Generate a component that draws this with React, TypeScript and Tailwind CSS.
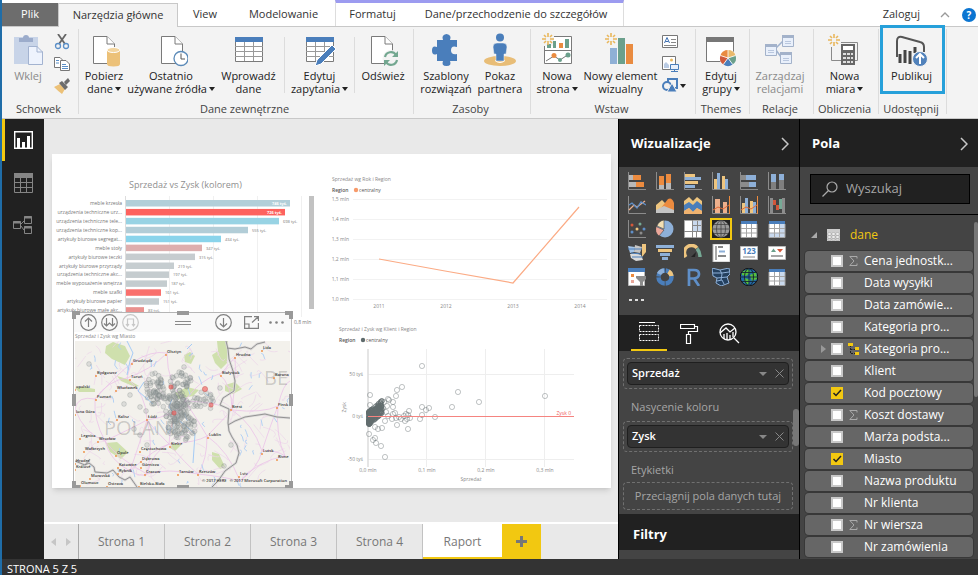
import { useState } from "react";
import type { ReactNode } from "react";

const SUN = "M0 -6V-2M0 2V6M-6 0H-2M2 0H6M-4 -4L-2 -2M4 -4L2 -2M-4 4L-2 2M4 4L2 2";

function Sun({ x, y }: { x: number; y: number }) {
    return <path d={SUN} transform={`translate(${x} ${y})`} stroke="#e9b75c" strokeWidth="1.6" fill="none" />
}

function Page({ x }: { x: number }) {
    return (
        <g transform={`translate(${x} 0)`} fill="#fff" stroke="#7a7a7a">
            <path d="M.5 3.5H14L21.5 11V30.5H.5Z" />
            <path d="M14 3.5V11H21.5" />
        </g>
    )
}

function Sheet() {
    return (
        <g>
            <path d="M3.500 4.500H30.500V28.500H3.500Z" fill="#fff" stroke="#7a7a7a" />
            <path d="M3 4H31V9H3Z" fill="#4a7ebb" />
            <path d="M3 13.500H31M3 18.500H31M3 23.500H31M12.500 9V28M21.500 9V28" stroke="#9a9a9a" fill="none" />
        </g>
    )
}

const ribbonIcons: Record<string, ReactNode> = {
    getData: (
        <>
            <Page x={6} />
            <path d="M20 17V31Q20 33.500 26.500 33.500T33 31V17Z" fill="#ecc178" />
            <ellipse cx="26.500" cy="17" rx="6.500" ry="2.500" fill="#f3d59f" stroke="#fff" />
        </>
    ),
    recent: (
        <>
            <Page x={7} />
            <circle cx="27" cy="25.500" r="7" fill="#fff" stroke="#5b8ab8" strokeWidth="1.300" />
            <path d="M27 20.500V26H31" stroke="#555" fill="none" />
        </>
    ),
    enter: <Sheet />,
    editQuery: (
        <>
            <Sheet />
            <path d="M12 33L14 27L29 12L33 16L18 31Z" fill="#4a7ebb" stroke="#fff" />
        </>
    ),
    refresh: (
        <>
            <Page x={5} />
            <circle cx="25" cy="25.500" r="8.500" fill="#f3f3f3" />
            <path d="M19 24A6 6 0 0 1 30 22M31 27A6 6 0 0 1 20 29" stroke="#73a790" strokeWidth="2.200" fill="none" />
            <path d="M32 18V24H26ZM18 33V27H24Z" fill="#73a790" />
        </>
    ),
    puzzle: (
        <path
            d="M8 7H14Q12 2 17.500 1Q23 2 21 7H28V14Q22 12 22 17.500Q22 22 28 21V28H21Q23 33 17.500 33Q12 33 14 28H8V21Q3 23 3 17.500Q3 12 8 14Z"
            fill="#4a7ebb"
        />
    ),
    partner: (
        <>
            <ellipse cx="17" cy="28" rx="16" ry="5" fill="#e8bd77" />
            <path d="M12 27Q17 31 22 27V28Q17 32 12 28Z" fill="#fff" />
            <circle cx="17" cy="4.500" r="4" fill="#4a7ebb" />
            <path d="M14 10H20Q24 10 24 14L23 21H21V28H13V21H11L10 14Q10 10 14 10Z" fill="#4a7ebb" stroke="#f3f3f3" strokeWidth=".5" />
        </>
    ),
    newPage: (
        <>
            <path d="M4.500 3.500H31.500V30.500H4.500ZM4 17.500H32" fill="#fff" stroke="#7a7a7a" />
            <path d="M2 0H14V13H2Z" fill="#f3f3f3" />
            <path d="M7 11H11V15H7ZM13 8H16V15H13ZM25 6H29V15H25Z" fill="#6ba08c" />
            <path d="M19 10H23V15H19Z" fill="#e98b40" />
            <path d="M6 28L14 23L20 27L29 21" stroke="#777" fill="none" />
            <circle cx="14" cy="22.500" r="2.500" fill="#e98b40" />
            <circle cx="20" cy="27" r="2" fill="#6ba08c" />
            <circle cx="28" cy="22" r="2.500" fill="#6ba08c" />
            <Sun x={8} y={6} />
        </>
    ),
    newVisual: (
        <>
            <path d="M6 15H13V31H6Z" fill="#8fb0d6" />
            <path d="M14 5H21V31H14Z" fill="#6ba08c" />
            <path d="M22 11H29V31H22Z" fill="#e98b40" />
            <Sun x={7} y={6} />
        </>
    ),
    theme: (
        <>
            <path d="M2.500 4.500H29.500V28.500H2.500Z" fill="#fff" stroke="#777" />
            <path d="M2 4H30V9H2Z" fill="#777" />
            <circle cx="24" cy="25" r="8.500" fill="#fff" />
            <path d="M24 25V17A8 8 0 0 1 31.600 22.500Z" fill="#e9b96b" />
            <path d="M24 25L31.600 22.500A8 8 0 0 1 28.700 31.500Z" fill="#6ba08c" />
            <path d="M24 25L28.700 31.500A8 8 0 0 1 19.300 31.500Z" fill="#4a7ebb" />
            <path d="M24 25L19.300 31.500A8 8 0 0 1 16.400 22.500Z" fill="#cf5b3d" />
            <path d="M24 25L16.400 22.500A8 8 0 0 1 24 17Z" fill="#e98b40" />
            <path d="M24 25V17M24 25L31.600 22.500M24 25L28.700 31.500M24 25L19.300 31.500M24 25L16.400 22.500" stroke="#fff" strokeWidth=".8" />
        </>
    ),
    relations: (
        <>
            <path d="M13 15L20 8M13 17L18 24" stroke="#9fb2cf" strokeWidth="1.500" />
            {[[2, 11], [19, 2], [17, 19]].map(([x, y]) => (
                <g key={x} transform={`translate(${x} ${y})`}>
                    <path d="M.5 .5H11.500V11.500H.5Z" fill="#e9f0fb" stroke="#a3b2ca" />
                    <path d="M0 0H12V3H0Z" fill="#a3b2ca" />
                    <path d="M3 6.500H9M3 8.500H9" stroke="#b9c7de" />
                </g>
            ))}
        </>
    ),
    measure: (
        <>
            <path d="M3.500 14V27.500H13M13 9.500H29.500V27.500H26" stroke="#8a8a8a" fill="none" />
            <path d="M13 11H27V32H13Z" fill="#666" />
            <path d="M15 13H25V17H15Z" fill="#fff" />
            <path d="M15 20H18V22H15ZM19 20H22V22H19ZM23 20H25V22H23ZM15 24H18V26H15ZM19 24H22V26H19ZM23 24H25V26H23ZM15 28H18V30H15ZM19 28H22V30H19ZM23 28H25V30H23Z" fill="#ddd" />
            <Sun x={6} y={7} />
        </>
    ),
    publish: (
        <>
            <path d="M2 24V8Q2 3 7 4L25 9Q29 10 29 14V19" stroke="#555" strokeWidth="2" fill="none" />
            <path d="M5 21V30M10 17V30M15 18V31M20 14V20" stroke="#444" strokeWidth="3" />
            <circle cx="25" cy="26" r="7.500" fill="#5182bb" stroke="#f3f3f3" />
            <path d="M25 31V21M21 25L25 21L29 25" stroke="#fff" strokeWidth="2" fill="none" />
        </>
    ),
    paste: (
        <>
            <path d="M3 4H27V31H3Z" fill="#c8d4e8" />
            <path d="M8 9V5H12Q12 2 15 2T18 5H22V9Z" fill="#9caccb" />
            <path d="M17.500 13.500H26L31.500 19V31.500H17.500Z" fill="#eef3fd" stroke="#a3b3d0" />
            <path d="M26 13V19H32" stroke="#a3b3d0" fill="none" />
        </>
    ),
}

interface RibbonButtonProps {
    icon: string,
    lines: string[],
    width: string,
    caret?: boolean,
    dim?: boolean,
    marked?: boolean,
}

function RibbonButton({ icon, lines, width, caret, dim, marked }: RibbonButtonProps) {
    return (
        <button className={`relative flex shrink-0 flex-col items-center pt-1.5 ${width} ${dim ? "text-[#8a8a8a]" : "text-[#222]"}`}>
            <svg width="34" height="34" viewBox="0 0 34 34">{ribbonIcons[icon]}</svg>
            <span className="mt-0.5 flex flex-col items-center">
                {lines.map((line, i) => (
                    <span key={line} className="flex items-center gap-0.5 leading-[13px] whitespace-nowrap">
                        {line}
                        {caret && i === lines.length - 1 && <Caret />}
                    </span>
                ))}
            </span>
            {marked && <span className="absolute -top-0.5 -right-px left-px h-[69px] border-3 border-[#26a0da]" />}
        </button>
    )
}

function Caret() {
    return <svg width="6" height="4" viewBox="0 0 6 4"><path d="M0 0H6L3 4Z" fill="#222" /></svg>
}

function RibbonGroup({ title, width, children }: { title: string, width: string, children: ReactNode }) {
    return (
        <section className={`relative flex shrink-0 flex-col justify-between pb-[3px] ${width}`}>
            <div className="flex">{children}</div>
            <h2 className="pr-1 text-center leading-[13px] text-[#444]">{title}</h2>
            <span className="absolute top-0.5 right-0 bottom-1 w-px bg-[#dcdcdc]" />
        </section>
    )
}

function Ribbon() {
    return (
        <div className="flex h-[92px] shrink-0 overflow-visible border-b border-[#c8c8c8] bg-[#f3f3f3] text-[11px]">
            <RibbonGroup title="Schowek" width="w-[77px]">
                <RibbonButton icon="paste" lines={["Wklej"]} width="w-[52px]" dim />
                <div className="flex flex-col gap-1.5 pt-[7px]">
                    <button aria-label="Wytnij">
                        <svg width="16" height="16" viewBox="0 0 16 16" fill="none">
                            <path d="M4 0L11 10M12 0L5 10" stroke="#666" strokeWidth="1.800" />
                            <circle cx="4" cy="12" r="2.500" stroke="#5b8fc7" strokeWidth="1.300" />
                            <circle cx="12" cy="12" r="2.500" stroke="#5b8fc7" strokeWidth="1.300" />
                        </svg>
                    </button>
                    <button aria-label="Kopiuj">
                        <svg width="16" height="16" viewBox="0 0 16 16" fill="#fff" stroke="#777">
                            <path d="M.5 1.500H6L9.500 5V11.500H.5Z" />
                            <path d="M6.500 4.500H12L15.500 8V14.500H6.500Z" />
                            <path d="M2 4.500H5M2 7H5M8 8.500H12M8 10.500H14M8 12.500H14" stroke="#5b8fc7" />
                        </svg>
                    </button>
                    <button aria-label="Malarz formatów">
                        <svg width="16" height="16" viewBox="0 0 16 16">
                            <path d="M0 9L6 6L11 11L8 16Q4 13 0 9Z" fill="#ecc178" />
                            <path d="M5 5L8 3L14 9L11 12ZM10 4L14 0L16 3L12 7Z" fill="#6d6d6d" />
                        </svg>
                    </button>
                </div>
            </RibbonGroup>
            <RibbonGroup title="Dane zewnętrzne" width="w-[335px]">
                <RibbonButton icon="getData" lines={["Pobierz", "dane"]} width="w-[50px]" caret />
                <RibbonButton icon="recent" lines={["Ostatnio", "używane źródła"]} width="w-[84px]" caret />
                <RibbonButton icon="enter" lines={["Wprowadź", "dane"]} width="w-[71px]" />
                <span className="mt-2.5 h-14 w-px bg-[#dcdcdc]" />
                <RibbonButton icon="editQuery" lines={["Edytuj", "zapytania"]} width="w-[69px]" caret />
                <span className="mt-2.5 h-14 w-px bg-[#dcdcdc]" />
                <RibbonButton icon="refresh" lines={["Odśwież"]} width="w-[56px]" />
            </RibbonGroup>
            <RibbonGroup title="Zasoby" width="w-[117px]">
                <RibbonButton icon="puzzle" lines={["Szablony", "rozwiązań"]} width="w-[64px]" />
                <RibbonButton icon="partner" lines={["Pokaz", "partnera"]} width="w-[44px]" />
            </RibbonGroup>
            <RibbonGroup title="Wstaw" width="w-[165px]">
                <RibbonButton icon="newPage" lines={["Nowa", "strona"]} width="w-[52px]" caret />
                <RibbonButton icon="newVisual" lines={["Nowy element", "wizualny"]} width="w-[75px]" />
                <div className="flex flex-col gap-1.5 pt-[7px] pl-1">
                    <button aria-label="Pole tekstowe">
                        <svg width="16" height="16" viewBox="0 0 16 16">
                            <path d="M.5 1.500H15.500V13.500H.5Z" fill="#fff" stroke="#777" />
                            <path d="M2.500 9L5 3.500L7.500 9M3.500 7.500H6.500" stroke="#3d6fb0" fill="none" />
                            <path d="M9 5.500H14M9 8.500H14M2 11.500H14" stroke="#888" />
                        </svg>
                    </button>
                    <button aria-label="Obraz">
                        <svg width="17" height="16" viewBox="0 0 17 16">
                            <path d="M.5 .5H13.500V13.500H.5Z" fill="#fff" stroke="#777" />
                            <path d="M2 12V8L4 6L7 9V12Z" fill="#b9cbe4" />
                            <circle cx="9.500" cy="4" r="1.500" fill="#e9b75c" />
                            <path d="M8.500 8.500H16.500V13.500H8.500ZM12.500 13V15.500M9 15.500H16" fill="#e9f0fb" stroke="#4a7ebb" />
                        </svg>
                    </button>
                    <button aria-label="Kształty" className="flex items-center gap-0.5">
                        <svg width="16" height="16" viewBox="0 0 16 16">
                            <path d="M6 1H15V10H6Z" fill="#f3f3f3" stroke="#4a7ebb" strokeWidth="2" />
                            <circle cx="5" cy="8" r="4" fill="#f3f3f3" stroke="#4a7ebb" strokeWidth="2" />
                            <path d="M10 5L15 14H5Z" fill="#4a7ebb" stroke="#f3f3f3" />
                        </svg>
                        <Caret />
                    </button>
                </div>
            </RibbonGroup>
            <RibbonGroup title="Themes" width="w-[54px]">
                <RibbonButton icon="theme" lines={["Edytuj", "grupy"]} width="w-[50px]" caret />
            </RibbonGroup>
            <RibbonGroup title="Relacje" width="w-[64px]">
                <RibbonButton icon="relations" lines={["Zarządzaj", "relacjami"]} width="w-[60px]" dim />
            </RibbonGroup>
            <RibbonGroup title="Obliczenia" width="w-[65px]">
                <RibbonButton icon="measure" lines={["Nowa", "miara"]} width="w-[61px]" caret />
            </RibbonGroup>
            <RibbonGroup title="Udostępnij" width="w-[68px]">
                <RibbonButton icon="publish" lines={["Publikuj"]} width="w-[65px]" marked />
            </RibbonGroup>
        </div>
    )
}

function TabBar() {
    return (
        <nav className="flex h-[27px] shrink-0 items-end border-b border-[#c8c8c8] bg-white text-[11px] text-[#333]">
            <button className="h-[23px] w-14 bg-[#6d6d6d] text-white">Plik</button>
            <button className="-mb-px h-6 w-[120px] border border-b-0 border-[#c8c8c8] bg-[#f3f3f3]">Narzędzia główne</button>
            <button className="h-[23px] w-[54px]">View</button>
            <button className="h-[23px] w-[103px]">Modelowanie</button>
            <div className="flex h-full border-x border-t-3 border-x-[#ddd] border-t-[#9c9bf0]">
                <button className="w-[73px]">Formatuj</button>
                <button className="w-[214px]">Dane/przechodzenie do szczegółów</button>
            </div>
            <div className="ml-auto flex h-[23px] items-center pr-0.5">
                <button>Zaloguj</button>
                <button aria-label="Zwiń wstążkę" className="px-5">
                    <svg width="10" height="6" viewBox="0 0 10 6"><path d="M1 5L5 1L9 5" stroke="#999" strokeWidth="1.300" fill="none" /></svg>
                </button>
                <button className="-ml-2 h-3.5 w-3.5 rounded-full bg-[#0b75d1] text-[10px] leading-[14px] font-bold text-white">?</button>
            </div>
        </nav>
    )
}

function SideRail() {
    return (
        <aside className="flex w-[42px] shrink-0 flex-col bg-[#212121]">
            <button aria-label="Raport" className="flex h-[42px] items-center justify-center border-l-3 border-[#f2c811] pr-0.5">
                <svg width="20" height="19" viewBox="0 0 20 19">
                    <path d="M.7 .7H18.300V17.300H.7Z" fill="none" stroke="#fff" strokeWidth="1.400" />
                    <path d="M3 7H6V17H3ZM8 11H11V17H8ZM13 5H16V17H13Z" fill="#fff" />
                </svg>
            </button>
            <button aria-label="Dane" className="flex h-[43px] items-center justify-center">
                <svg width="19" height="20" viewBox="0 0 19 20">
                    <path d="M.5 .5H18.500V19.500H.5ZM0 9.500H19M0 14.500H19M6.500 4V20M12.500 4V20" fill="none" stroke="#858585" />
                    <path d="M0 0H19V5H0Z" fill="#858585" />
                </svg>
            </button>
            <button aria-label="Model" className="flex h-[42px] items-center justify-center">
                <svg width="20" height="19" viewBox="0 0 20 19" fill="none" stroke="#858585">
                    <path d="M.5 5.500H7.500V12.500H.5ZM11.500 .5H18.500V7.500H11.500ZM11.500 10.500H18.500V17.500H11.500Z" />
                    <path d="M0 6.500H8M11 1.500H19M11 11.500H19" strokeWidth="2" />
                    <path d="M8 8L11 5M8 10L11 14" />
                </svg>
            </button>
        </aside>
    )
}

const salesBars = [
    { name: "meble krzesła", w: 164, value: "746 tyś.", color: "#b2cfd9", inside: true },
    { name: "urządzenia techniczne urz...", w: 159, value: "726 tyś.", color: "#fd625e", inside: true },
    { name: "urządzenia techniczne tele...", w: 153, value: "698 tyś.", color: "#98d3e4" },
    { name: "urządzenia techniczne kop...", w: 122, value: "555 tyś.", color: "#b2cdd7" },
    { name: "artykuły biurowe segregat...", w: 95, value: "434 tyś.", color: "#8ad4eb" },
    { name: "meble stoły", w: 76, value: "347 tyś.", color: "#ddaeae" },
    { name: "artykuły biurowe teczki", w: 69, value: "315 tyś.", color: "#c6cccf" },
    { name: "artykuły biurowe przyrządy", w: 48, value: "219 tyś.", color: "#c6cdd0" },
    { name: "urządzenia techniczne akc...", w: 43, value: "197 tyś.", color: "#c5cccf" },
    { name: "meble wyposażenie wnętrza", w: 41, value: "187 tyś.", color: "#c4cccf" },
    { name: "meble szafki", w: 35, value: "161 tyś.", color: "#f9706d" },
    { name: "artykuły biurowe papier", w: 33, value: "151 tyś.", color: "#c5cccf" },
    { name: "artykuły biurowe małe akc...", w: 18, value: "83 tyś.", color: "#ea918f" },
]

function BarChart() {
    return (
        <svg className="h-[180px] w-full" viewBox="0 0 270 180" preserveAspectRatio="xMinYMin meet">
            <text x="77" y="34" fontSize="9" fill="#8f8f8f">Sprzedaż vs Zysk (kolorem)</text>
            <path d="M117.500 42V163M161.500 42V163M205.500 42V163M249.500 42V163" stroke="#f0f0f0" />
            <path d="M73.500 42V163" stroke="#ddd" />
            {salesBars.map((b, i) => (
                <g key={b.name} fontSize="5">
                    <text x="70" y={51 + i * 8.93} textAnchor="end" fill="#777">{b.name}</text>
                    <rect x="74" y={46 + i * 8.93} width={b.w} height="6.500" fill={b.color} />
                    <text
                        x={b.inside ? 71 + b.w : 78 + b.w}
                        y={51 + i * 8.93}
                        textAnchor={b.inside ? "end" : "start"}
                        fill={b.inside ? "#fff" : "#777"}
                        fontWeight={b.inside ? "700" : "400"}
                        fontSize="4"
                    >
                        {b.value}
                    </text>
                </g>
            ))}
            <path d="M257 42H262V155H257Z" fill="#c2c2c2" />
            <text x="242" y="170" fontSize="5" fill="#777">0,8 mln</text>
        </svg>
    )
}

function LineChart() {
    const ticks = ["1,5 mln", "1,4 mln", "1,3 mln", "1,2 mln", "1,1 mln", "1,0 mln"]
    return (
        <svg className="h-[160px] w-full" viewBox="0 0 285 160" preserveAspectRatio="xMinYMin meet" fontSize="5" fill="#888">
            <text x="6" y="27">Sprzedaż wg Rok i Region</text>
            <text x="6" y="38" fontWeight="600" fill="#555">Region</text>
            <circle cx="30" cy="36" r="2.200" fill="#f79a6b" />
            <text x="33" y="38" fill="#555">centralny</text>
            {ticks.map((t, i) => (
                <g key={t}>
                    <text x="23" y={47 + i * 20} textAnchor="end">{t}</text>
                    <path d={`M27 ${45.5 + i * 20}H281`} stroke="#f2f2f2" />
                </g>
            ))}
            {["2011", "2012", "2013", "2014"].map((t, i) => (
                <text key={t} x={53 + i * 67} y="154" textAnchor="middle">{t}</text>
            ))}
            <path d="M53 105L119 117L187 129L253 53" stroke="#fbab85" strokeWidth="1.200" fill="none" />
        </svg>
    )
}

// keeps the generated points identical between renders
function seeded(seed: number) {
    let s = seed
    return () => {
        s = (s * 16807) % 2147483647
        return s / 2147483647
    }
}

const outliers = [
    [96, 52], [76, 73], [71, 76], [70, 82], [44, 81], [132, 78], [153, 88], [219, 82], [126, 93],
    [96, 93], [103, 94], [100, 96], [83, 97], [109, 103], [96, 101], [94, 105], [71, 111], [82, 115],
    [43, 120], [49, 124], [47, 126], [50, 129], [55, 132], [59, 143], [56, 114], [52, 115], [49, 113],
    [63, 86], [62, 85], [58, 88], [67, 88], [67, 93], [44, 91], [57, 94], [61, 92], [54, 96], [80, 100],
    [69, 99], [84, 104], [79, 107], [66, 105], [59, 107], [73, 103], [75, 105], [78, 102], [82, 101],
    [62, 102], [70, 104], [81, 105], [67, 100], [60, 98], [55, 92],
]
const rndSales = seeded(41)
const dense = Array.from({ length: 150 }, () => {
    const r = rndSales()
    return [43 + r * r * 13, 104 + (rndSales() - 0.5) * 13 - r * r * 11]
})

function ScatterChart() {
    return (
        <svg className="h-[172px] w-full" viewBox="0 0 285 172" preserveAspectRatio="xMinYMin meet" fontSize="5" fill="#888">
            <text x="13" y="17">Sprzedaż i Zysk wg Klient i Region</text>
            <text x="13" y="28" fontWeight="600" fill="#555">Region</text>
            <circle cx="37" cy="26" r="2.200" fill="#5f6b6d" />
            <text x="40" y="28" fill="#555">centralny</text>
            <path d="M100.500 35V153M159.500 35V153M218.500 35V153M42 60.500H248M42 145.500H248" stroke="#eee" />
            <path d="M42 35V153" stroke="#ddd" strokeWidth="1.500" />
            <text x="37" y="62" textAnchor="end">50 tyś</text>
            <text x="37" y="104" textAnchor="end">0 tyś</text>
            <text x="37" y="147" textAnchor="end">-50 tyś</text>
            <text transform="translate(20 88) rotate(-90)" textAnchor="end">Zysk</text>
            <g fill="none" stroke="#626c6e">
                {outliers.map(([x, y], i) => <circle key={i} cx={x} cy={y} r="2.600" strokeWidth=".8" strokeOpacity=".5" />)}
                {dense.map(([x, y], i) => <circle key={i} cx={x} cy={y} r="2.400" strokeWidth="1" strokeOpacity=".75" />)}
            </g>
            <path d="M42 102.500H248" stroke="#f58480" strokeWidth="1.200" />
            <text x="245" y="101" textAnchor="end" fill="#f0605c">Zysk 0</text>
            {["0,0 mln", "0,1 mln", "0,2 mln", "0,3 mln"].map((t, i) => (
                <text key={t} x={42 + i * 59} y="158" textAnchor="middle">{t}</text>
            ))}
            <text x="145" y="167" textAnchor="middle">Sprzedaż</text>
        </svg>
    )
}

const cities: [string, number, number][] = [
    ["Olsztyn", 92, 12], ["Lida", 188, 8], ["Hrodna", 161, 15], ["Grudziądz", 58, 21], ["Bydgoszcz", 22, 33],
    ["Toruń", 56, 37], ["Białystok", 147, 33], ["Barana", 200, 35], ["opolski", 1, 47], ["Włocławek", 42, 48],
    ["Poznań", 22, 57], ["Brest", 157, 67], ["Pinsk", 203, 65], ["lona Góra", 1, 72], ["Kalisz", 43, 77],
    ["Łódź", 73, 77], ["Legnica", 6, 96], ["Wrocław", 24, 99], ["Lublin", 134, 95], ["Wałbrzych", 10, 109],
    ["Opole", 42, 113], ["Kielce", 96, 104], ["Częstochowa", 66, 109], ["Dąbrowa", 67, 119], ["Górnicza", 67, 125],
    ["Lutsk", 188, 111], ["Rivne", 203, 117], ["Hradec", 1, 121], ["Králové", 1, 127], ["Katowice", 44, 125],
    ["Rybnik", 44, 131], ["Cracow", 71, 132], ["Tarnów", 104, 132], ["Rzeszów", 124, 132], ["Moravská", 16, 136],
    ["Ostrava", 33, 144], ["Bielsko-Biała", 65, 144], ["Olomouc", 6, 143], ["Lviv", 165, 134],
]

const rnd = seeded(97)
const clusters = [[80, 48, 18, 26, 55], [106, 44, 22, 22, 40], [100, 66, 26, 20, 75], [107, 86, 26, 24, 60], [128, 60, 22, 16, 22]]
const customers = clusters.flatMap(([cx, cy, w, h, n]) => Array.from({ length: n }, () => {
    const a = rnd() * 6.28
    const r = Math.sqrt(rnd())
    return [cx + Math.cos(a) * r * w / 1.8, cy + Math.sin(a) * r * h / 1.6]
}))
const lonely = [[14, 23], [109, 26], [55, 54], [49, 63], [71, 70], [65, 66], [145, 47], [156, 104], [149, 125], [65, 94], [59, 88], [72, 104]]

const roadHubs = [[20, 58], [52, 37], [72, 79], [94, 103], [72, 133], [30, 100], [132, 95], [110, 60], [144, 33], [157, 69], [92, 12], [58, 21], [187, 110], [123, 133], [165, 140], [203, 65], [55, 130], [0, 68], [215, 40], [210, 115], [160, 16]]
const roads = roadHubs.flatMap(([x, y], i) => roadHubs
    .filter(([a, b], j) => j > i && Math.hypot(a - x, b - y) < 56)
    .map(([a, b]) => `M${x} ${y}Q${(x + a) / 2 + rnd() * 20 - 10} ${(y + b) / 2 + rnd() * 20 - 10} ${a} ${b}`))
    .join("")
const lanes = Array.from({ length: 150 }, () => {
    const x = rnd() * 215
    const y = rnd() * 146
    return `M${x.toFixed(1)} ${y.toFixed(1)}q${(rnd() * 14 - 7).toFixed(1)} ${(rnd() * 14 - 7).toFixed(1)} ${(rnd() * 30 - 15).toFixed(1)} ${(rnd() * 30 - 15).toFixed(1)}`
}).join("")
const streams = Array.from({ length: 60 }, () => {
    const x = rnd() * 215
    const y = rnd() * 146
    return `M${x.toFixed(1)} ${y.toFixed(1)}l${(rnd() * 4 - 2).toFixed(1)} ${(rnd() * 5).toFixed(1)} ${(rnd() * 5 - 2).toFixed(1)} ${(rnd() * 5).toFixed(1)}`
}).join("")
const borders = "M151 0L153 8L154 18L158 30L160 40L159 50L148 57L145 64L154 68L153 82L154 90L157 96L162 104L164 112L161 122L150 130L143 140L137 146M152 7L160 8L170 6L176 8L182 3L190 1M153 84L160 80L170 76L190 73L202 76L215 77M0 120L10 124L14 122L19 126L20 131L32 132L38 129L44 136L50 139L55 136L62 146M10 124L15 118"

function MapDrawing() {
    return (
        <svg className="block w-full flex-1" viewBox="0 0 215 146" preserveAspectRatio="xMidYMid slice">
            <path d="M0 0H215V146H0Z" fill="#f3f1ec" />
            <path d="M31 5L38 1L50 5L55 15L50 24L37 18L30 12ZM142 0H153L152 22L146 28L140 22L137 14L143 10ZM150 44L160 41L167 48L158 53L150 50ZM109 14L115 11L120 15L116 23L110 21ZM31 102L42 101L53 111L46 118L35 111ZM137 111L144 113L150 126L145 128L137 119ZM0 47L8 46L20 48L20 51L4 51ZM100 52L112 46L124 49L118 55L103 58ZM42 35L52 38L64 45L60 46L46 40ZM98 102L106 104L100 110L95 107Z" fill="#cfe0ad" />
            <path d={lanes} stroke="#ecd5ea" strokeWidth=".7" fill="none" />
            <path d={roads} stroke="#ebc3e8" strokeWidth=".8" fill="none" />
            <path d={streams} stroke="#b3d1f4" strokeWidth="1" fill="none" />
            <path d="M112 8L117 3M114 15L118 12M97 58L94 66L98 72M52 0L58 12L55 20L52 34M69 41L63 50L78 63M105 80L120 93L118 122" stroke="#a5cbf5" fill="none" />
            <path d={borders} stroke="#dcdada" strokeWidth="2.500" fill="none" />
            <path d={borders} stroke="#8a8a8a" strokeWidth=".9" fill="none" />
            <g fill="#000" fillOpacity=".18" fontSize="20">
                <text x="29" y="94">POLAND</text>
                <text x="189" y="44">BE</text>
            </g>
            {cities.map(([name, x, y]) => (
                <g key={name}>
                    <circle cx={x - 1} cy={y + 2} r=".9" fill="#ef8a3c" />
                    <text x={x} y={y} fontSize="4" fontWeight="600" fill="#333">{name}</text>
                </g>
            ))}
            <g fill="#999f9f" fillOpacity=".25" stroke="#7d8383" strokeOpacity=".45" strokeWidth=".6">
                {customers.map(([x, y], i) => <circle key={i} cx={x} cy={y} r="2.400" />)}
                {lonely.map(([x, y], i) => <circle key={i} cx={x} cy={y} r="2.400" />)}
            </g>
            <g fill="#f0605c" fillOpacity=".65" stroke="#c65b58" strokeWidth=".5">
                <circle cx="130" cy="48" r="2.600" />
                <circle cx="96" cy="46" r="2.200" />
                <circle cx="99" cy="72" r="2.200" />
                <circle cx="136" cy="64" r="2.200" />
            </g>
            <g fontSize="4" fontWeight="600" fill="#333">
                <text x="127" y="141">© 2017 HERE</text>
                <text x="212" y="141" textAnchor="end">© 2017 Microsoft Corporation</text>
            </g>
        </svg>
    )
}

function DrillIcon({ label, d, faded }: { label: string, d: string, faded?: boolean }) {
    return (
        <button aria-label={label}>
            <svg width="17" height="17" viewBox="0 0 17 17" fill="none" stroke={faded ? "#c8c8c8" : "#808080"} strokeWidth="1.200">
                <circle cx="8.500" cy="8.500" r="7.800" />
                <path d={d} />
            </svg>
        </button>
    )
}

function MapVisual() {
    const handles = ["-top-0.5 -left-0.5", "-top-0.5 left-1/2 -translate-x-1/2", "-top-0.5 -right-0.5", "top-1/2 -left-0.5 -translate-y-1/2",
        "top-1/2 -right-0.5 -translate-y-1/2", "-bottom-0.5 -left-0.5", "-bottom-0.5 left-1/2 -translate-x-1/2", "-bottom-0.5 -right-0.5"]
    const shapes = [
        "h-2 w-2 [clip-path:polygon(0_0,100%_0,100%_50%,50%_50%,50%_100%,0_100%)]",
        "h-1 w-3",
        "h-2 w-2 [clip-path:polygon(0_0,100%_0,100%_100%,50%_100%,50%_50%,0_50%)]",
        "h-3 w-1",
        "h-3 w-1",
        "h-2 w-2 [clip-path:polygon(0_0,50%_0,50%_50%,100%_50%,100%_100%,0_100%)]",
        "h-1 w-3",
        "h-2 w-2 [clip-path:polygon(50%_0,100%_0,100%_100%,0_100%,0_50%,50%_50%)]",
    ]
    return (
        <div className="absolute bottom-0 left-[21px] flex h-[176px] w-[219px] flex-col border border-[#b5b5b5] bg-white">
            <div className="flex h-[19px] items-center gap-1 bg-[#f9f9f9] pl-1.5">
                <DrillIcon label="W górę" d="M8.500 13V4M5 7.500L8.500 4L12 7.500" />
                <DrillIcon label="Następny poziom" d="M5.500 4V12M11.500 4V12M3 9.500L5.500 12L8.500 9L11.500 12L14 9.500" />
                <DrillIcon label="Rozwiń" d="M5.500 12V5H11.500V12M4 10L5.500 12L7 10M10 10L11.500 12L13 10" faded />
                <button aria-label="Przesuń" className="ml-8 h-1 w-4 border-y border-[#8a8a8a]" />
                <span className="flex-1" />
                <DrillIcon label="Przejdź w dół" d="M8.500 4V13M5 9.500L8.500 13L12 9.500" />
                <button aria-label="Tryb koncentracji uwagi" className="ml-2">
                    <svg width="15" height="13" viewBox="0 0 15 13" fill="none" stroke="#808080" strokeWidth="1.200">
                        <path d="M8 .6H.6V12.400H14.400V7M1 8H5V12M8 6.500L14 1M10 .6H14.400V5" />
                    </svg>
                </button>
                <button aria-label="Więcej opcji" className="mr-1.5 ml-1.5">
                    <svg width="16" height="3" viewBox="0 0 16 3" fill="#808080">
                        <circle cx="1.500" cy="1.500" r="1.300" /><circle cx="7.500" cy="1.500" r="1.300" /><circle cx="13.500" cy="1.500" r="1.300" />
                    </svg>
                </button>
            </div>
            <p className="h-[9px] pl-px text-[5px] leading-[9px] text-[#888]">Sprzedaż i Zysk wg Miasto</p>
            <div className="flex min-h-0 flex-1 px-px"><MapDrawing /></div>
            {handles.map((h, i) => (
                <span key={h} className={`absolute bg-[#999] ${h} ${shapes[i]}`} />
            ))}
        </div>
    )
}

function Canvas() {
    const [active, setActive] = useState("Raport")
    const pages = ["Strona 1", "Strona 2", "Strona 3", "Strona 4", "Raport"]
    return (
        <main className="flex min-w-0 flex-1 flex-col bg-[#e9e9e9]">
            <div className="min-h-0 flex-1 px-2 pt-[35px] pr-[7px]">
                <div className="relative flex h-[334px] overflow-hidden bg-white shadow-md">
                    <div className="w-[274px] shrink-0">
                        <BarChart />
                    </div>
                    <div className="min-w-0 flex-1">
                        <LineChart />
                        <ScatterChart />
                    </div>
                    <MapVisual />
                </div>
            </div>
            <div className="flex h-[37px] shrink-0 border-t-2 border-white text-xs text-[#777]">
                <div className="flex w-[35px] items-center justify-center gap-2.5 border-r border-[#aaa]">
                    <button aria-label="Poprzednia"><svg width="5" height="8" viewBox="0 0 5 8"><path d="M5 0V8L0 4Z" fill="#c6c6c6" /></svg></button>
                    <button aria-label="Następna"><svg width="5" height="8" viewBox="0 0 5 8"><path d="M0 0V8L5 4Z" fill="#c6c6c6" /></svg></button>
                </div>
                {pages.map((p) => (
                    <button
                        key={p}
                        onClick={() => setActive(p)}
                        className={active === p ? "w-[79px] border-b-2 border-[#f2c811] bg-white pt-0.5" : "w-[86px] border-r border-[#c2c2c2]"}
                    >
                        {p}
                    </button>
                ))}
                <button aria-label="Nowa strona" className="flex w-[39px] items-center justify-center bg-[#f2c811]">
                    <svg width="11" height="11" viewBox="0 0 11 11"><path d="M5.500 0V11M0 5.500H11" stroke="#777" strokeWidth="3" /></svg>
                </button>
            </div>
        </main>
    )
}

const AXIS = <path d="M.5 0V17.500H18" stroke="#8c8c8c" fill="none" />

function MiniTable({ tint }: { tint?: string }) {
    return (
        <g>
            <path d="M1 1H17V18H1Z" fill="#fff" />
            {tint && <path d={tint} fill="#c9d9ee" />}
            <path d="M1 1H17V4H1Z" fill="#4a7ebb" />
            <path d="M1 4V17.500H17V4M1 8.500H17M1 13H17M6.500 4V18M11.500 4V18" stroke="#a5a5a5" fill="none" />
        </g>
    )
}

const visuals: ReactNode[] = [
    <>{AXIS}<path d="M1 3H5V8H1ZM1 10H8V15H1Z" fill="#b9b9b9" /><path d="M5 3H13V8H5ZM8 10H16V15H8Z" fill="#ec8b3f" /></>,
    <>{AXIS}<path d="M3 13H8V17H3ZM10 11H15V17H10Z" fill="#b9b9b9" /><path d="M3 4H8V13H3ZM10 2H15V11H10Z" fill="#ec8b3f" /></>,
    <>{AXIS}<path d="M1 2H11V5H1ZM1 9H14V12H1Z" fill="#eec57f" /><path d="M1 5H17V8H1ZM1 13H11V16H1Z" fill="#8eb0d8" /></>,
    <>{AXIS}<path d="M2 7H5V17H2ZM10 4H13V17H10Z" fill="#eec57f" /><path d="M5 1H8V17H5ZM13 7H16V17H13Z" fill="#8eb0d8" /></>,
    <>{AXIS}<path d="M1 3H6V8H1ZM1 10H9V15H1Z" fill="#8c8c8c" /><path d="M6 3H16V8H6ZM9 10H16V15H9Z" fill="#8eb0d8" /></>,
    <>{AXIS}<path d="M3 10H8V17H3ZM11 8H16V17H11Z" fill="#7f7f7f" /><path d="M3 2H8V10H3ZM11 2H16V8H11Z" fill="#8eb0d8" /></>,
    <>{AXIS}<path d="M1 14L6 9L9 11L17 5" stroke="#eeb08c" fill="none" strokeWidth="1.300" /><path d="M1 9L4 7L9 12L13 6L18 9" stroke="#5f8fc8" fill="none" strokeWidth="1.300" /></>,
    <><path d="M0 9L6 4L12 10L18 7V17H0Z" fill="#eec57f" /><path d="M5 12L12 3Q16 1 18 7V17H5Z" fill="#ec8b3f" /><path d="M0 14L8 10L18 14V17H0Z" fill="#c4c4c4" /></>,
    <><path d="M0 5L5 1L9 5L13 1L18 5V18H0Z" fill="#eec57f" /><path d="M0 9L5 6L9 9L13 5L18 9V15L13 12L9 16L5 12L0 15Z" fill="#4a7ebb" /><path d="M0 15L5 12L9 16L13 12L18 15V18H0Z" fill="#efb26f" /></>,
    <>{AXIS}<path d="M3 3H8V17H3ZM11 6H15V17H11Z" fill="#eeb08c" /><path d="M17.500 0V18" stroke="#ec8b3f" /><path d="M1 14L6 11L11 13L17 9" stroke="#e26b38" fill="none" /></>,
    <>{AXIS}<path d="M2 7H5V17H2ZM10 5H13V17H10Z" fill="#eec57f" /><path d="M5 2H8V17H5ZM13 6H16V17H13Z" fill="#8eb0d8" /><path d="M17.500 0V18" stroke="#ec8b3f" /><path d="M1 14L6 11L11 13L17 9" stroke="#e26b38" fill="none" /></>,
    <>{AXIS}<path d="M2 2H5V17H2ZM14 2H17V17H14Z" fill="#8c8c8c" /><path d="M5 4H8V9H5ZM8 9H11V14H8Z" fill="#d4573a" /><path d="M11 3H14V13H11Z" fill="#76a995" /></>,
    <>{AXIS}<circle cx="4" cy="5" r="1.500" fill="#d4573a" /><circle cx="12" cy="4" r="1.500" fill="#76a995" /><circle cx="9" cy="9" r="1.500" fill="#eec57f" /><circle cx="4" cy="12" r="1.500" fill="#5f8fc8" /><circle cx="16" cy="9" r="1.500" fill="#5f8fc8" /><circle cx="13" cy="13" r="1.500" fill="#8c8c8c" /></>,
    <><circle cx="9" cy="9" r="8.500" fill="#8eb0d8" /><path d="M8 9V0A9 9 0 0 0 1 6Z" fill="#f3dfb3" stroke="#444" strokeWidth=".6" /><path d="M8 10L0 6.500A9 9 0 0 0 3 16Z" fill="#eba79a" stroke="#444" strokeWidth=".6" /></>,
    <><path d="M.5 .5H17.500V17.500H.5Z" fill="#fff" stroke="#aaa" /><path d="M9 1H17V11H9Z" fill="#c9d9ee" /><path d="M8.500 0V18M0 11.500H18M12.500 12V18M13.500 1V11M9 5.500H17" stroke="#888" /></>,
    <><circle cx="9" cy="9" r="8.500" fill="#9a9a9a" /><path d="M9 0V18M0 9H18M2 4.500H16M2 13.500H16" stroke="#444" strokeWidth=".8" /><ellipse cx="9" cy="9" rx="4.500" ry="8.500" fill="none" stroke="#444" strokeWidth=".8" /></>,
    <MiniTable />,
    <MiniTable tint="M1 13H17V18H1ZM11 4H17V18H11Z" />,
    <><path d="M0 2L7 3L6 8L2 9Z" fill="#a5c4e6" /><path d="M7 1L14 3L12 9L6 8Z" fill="#c5c5c5" /><path d="M14 0H18V8L14 13Z" fill="#eec57f" /><path d="M2 10L8 9L13 11L15 16L8 17L3 14Z" fill="#dadada" /><path d="M0 5H14M3 9L13 10M4 13H15" stroke="#4a7ebb" /></>,
    <><path d="M0 1H18V4H0ZM4 9H14V12H4Z" fill="#8eb0d8" /><path d="M2 5H16V8H2Z" fill="#eec57f" /><path d="M6 13H12V16H6Z" fill="#8eb0d8" /></>,
    <g fill="none" strokeWidth="3.500"><path d="M2 13A7 7 0 0 1 13 4" stroke="#eec57f" /><path d="M13 4.500Q16 8 16 13" stroke="#76a995" /><path d="M7 13L12 8L11 13Z" fill="#222" stroke="none" /></g>,
    <><path d="M1 0H18V18H1Z" fill="#fff" stroke="#bbb" /><path d="M4 2V16" stroke="#aaa" strokeWidth="2" /><path d="M6 3H11M6 12H14" stroke="#888" strokeWidth="2" /><path d="M7 7.500H13" stroke="#8eb0d8" strokeWidth="2" /></>,
    <><path d="M.5 2.500H17.500V15.500H.5Z" fill="#fff" stroke="#bbb" /><text x="9" y="10" fontSize="8" fontWeight="700" textAnchor="middle" fill="#4a7ebb">123</text><path d="M3 13H15" stroke="#888" /></>,
    <><path d="M.5 2.500H17.500V15.500H.5Z" fill="#fff" stroke="#bbb" /><path d="M3 8L5.500 4.500L8 8Z" fill="#6ba08c" /><path d="M9 5H15L12 8.500Z" fill="#d4573a" /><path d="M3 12H15" stroke="#888" strokeWidth="1.500" /></>,
    <><path d="M.5 .5H16.500V17.500H.5Z" fill="#fff" stroke="#bbb" /><path d="M0 0H17V4H0Z" fill="#4a7ebb" /><path d="M3 6H6V9H3Z" fill="#ec8b3f" /><path d="M3 12H6V15H3Z" fill="#e8a79a" /><path d="M8 8H19V10L15 14V18H12V14L8 10Z" fill="#8c8c8c" /></>,
    <g fill="none" strokeWidth="4.500"><circle cx="9" cy="9" r="6.500" stroke="#4a7ebb" strokeDasharray="9.400 .8" /><path d="M12.500 3.500A6.500 6.500 0 0 1 15.500 8" stroke="#eec57f" /><path d="M3 6A6.500 6.500 0 0 1 8 2.500" stroke="#8eb0d8" /></g>,
    <path d="M5 18V2H10Q15 2 15 6T10 10.500H5M10 10.500L15 18" stroke="#5f8fc8" strokeWidth="2.700" fill="none" />,
    <><path d="M0 0L8 2L17 0L18 6L15 9L17 15L9 18L4 15L5 10L1 8Z" fill="#24405f" stroke="#8eb0d8" /><path d="M1 5H10L17 4M5 10L15 9M8 2L10 6M5 13L10 12L12 16M10 6L9 12" stroke="#8eb0d8" fill="none" /></>,
    <><circle cx="9" cy="9" r="8.800" fill="#246aa5" stroke="#111" /><path d="M2 4L8 1L11 4L6 8L2 7ZM10 7L16 4L17 11L12 13ZM5 10L10 12L8 17L4 14Z" fill="#56c13c" /><path d="M9 0V18M0 9H18M2 4.500H16M2 13.500H16" stroke="#152638" strokeWidth=".9" /><ellipse cx="9" cy="9" rx="4.500" ry="8.500" stroke="#152638" fill="none" /></>,
    <MiniTable tint="M11 4H17V18H11Z" />,
]

const visualNames = ["Skumulowany słupkowy", "Skumulowany kolumnowy", "Grupowany słupkowy", "Grupowany kolumnowy", "100% słupkowy", "100% kolumnowy",
    "Liniowy", "Warstwowy", "Skumulowany warstwowy", "Liniowy i kolumnowy", "Liniowy i grupowany", "Kaskadowy", "Punktowy", "Kołowy", "Mapa drzewa", "Mapa",
    "Tabela", "Macierz", "Kartogram", "Lejek", "Miernik", "Karta z wieloma wierszami", "Karta", "KPI", "Fragmentator", "Pierścieniowy", "R", "Mapa kształtów", "Mapa ArcGIS", "Tabela 2"]

function PanelTitle({ children }: { children: ReactNode }) {
    return (
        <header className="flex h-12 shrink-0 items-center justify-between bg-[#212121] pt-0.5 pr-2.5 pl-3 text-white">
            <h2 className="text-[13px] font-bold">{children}</h2>
            <button aria-label="Zwiń okienko">
                <svg width="8" height="14" viewBox="0 0 8 14"><path d="M1 1L7 7L1 13" stroke="#c8c8c8" strokeWidth="1.500" fill="none" /></svg>
            </button>
        </header>
    )
}

function FieldWell({ name }: { name: string }) {
    return (
        <div className="rounded-sm border border-dashed border-[#707070] p-[3px]">
            <div className="flex h-[23px] items-center gap-2 rounded-sm border border-[#1f1f1f] bg-[#333] pr-1 pl-1 text-[11px] font-semibold text-white">
                <span className="flex-1">{name}</span>
                <button aria-label={`Opcje: ${name}`}><svg width="8" height="4" viewBox="0 0 8 4"><path d="M0 0H8L4 4Z" fill="#888" /></svg></button>
                <button aria-label={`Usuń: ${name}`}><svg width="9" height="9" viewBox="0 0 9 9"><path d="M.5 .5L8.500 8.500M8.500 .5L.5 8.500" stroke="#888" /></svg></button>
            </div>
        </div>
    )
}

function Visualizations() {
    return (
        <aside className="flex w-[182px] shrink-0 flex-col border-x border-black bg-[#444]">
            <PanelTitle>Wizualizacje</PanelTitle>
            <div className="grid shrink-0 grid-cols-[repeat(6,28px)] px-1 pt-0.5 pb-[3px]">
                {visuals.map((v, i) => (
                    <button key={visualNames[i]} aria-label={visualNames[i]} className="flex h-6 w-7 items-center justify-center">
                        <svg
                            className={i === 15 ? "h-[22px] w-[22px] border-2 border-[#f2c811] bg-[#222]" : "h-[18px] w-[18px]"}
                            viewBox="0 0 18 18"
                        >
                            {v}
                        </svg>
                    </button>
                ))}
                <button aria-label="Więcej wizualizacji" className="flex h-[23px] items-center justify-center">
                    <svg width="16" height="3" viewBox="0 0 16 3" fill="#ddd"><path d="M0 0H3V2H0ZM6 0H9V2H6ZM12 0H15V2H12Z" /></svg>
                </button>
            </div>
            <div className="flex h-9 shrink-0 bg-[#212121] pl-3">
                <button aria-label="Pola" className="flex w-9 items-center justify-center border-b-2 border-[#f2c811]">
                    <svg width="20" height="20" viewBox="0 0 20 20" fill="none" stroke="#fff">
                        <path d="M0 .5H16" />
                        <path d="M.5 3.500H19.500V9.500H.5ZM.5 12.500H19.500V18.500H.5Z" strokeDasharray="2 1" />
                    </svg>
                </button>
                <button aria-label="Formatuj" className="ml-1 flex w-9 items-center justify-center">
                    <svg width="19" height="21" viewBox="0 0 19 21" fill="none" stroke="#fff">
                        <path d="M.5 1.500H14.500V5.500H.5ZM14.500 3.500H17.500V8.500H8.500V11M6.500 11.500H10.500V20.500H6.500Z" strokeWidth="1.200" />
                    </svg>
                </button>
                <button aria-label="Analiza" className="ml-1 flex w-9 items-center justify-center">
                    <svg width="21" height="21" viewBox="0 0 21 21" fill="none" stroke="#fff" strokeWidth="1.300">
                        <circle cx="9" cy="9" r="8" />
                        <path d="M15 15L20 20M1 10L7 5L11 9L16 5M5 16V11M8 17V10M11 17V12M14 14V9" />
                    </svg>
                </button>
            </div>
            <div className="relative flex min-h-0 flex-1 flex-col px-1 pr-1.5 pt-[7px] text-[#a6a6a6]">
                <FieldWell name="Sprzedaż" />
                <p className="pt-2.5 pb-1.5 pl-2 text-[11px] leading-4">Nasycenie koloru</p>
                <FieldWell name="Zysk" />
                <p className="pt-2.5 pb-1 pl-2 text-[11px] leading-4">Etykietki</p>
                <p className="flex h-7 shrink-0 items-center justify-center rounded-sm border border-dashed border-[#707070] text-[11px] whitespace-nowrap">
                    Przeciągnij pola danych tutaj
                </p>
                <span className="absolute top-[58px] right-0 h-[37px] w-1.5 rounded-sm bg-[#777]" />
            </div>
            <h2 className="flex h-9 shrink-0 items-center bg-[#212121] pt-1.5 pl-3.5 text-[13px] font-bold text-white">Filtry</h2>
            <div className="h-[9px] shrink-0" />
        </aside>
    )
}

interface Field {
    name: string,
    mark?: "sum" | "tree",
    on?: boolean,
}

const fields: Field[] = [
    { name: "Cena jednostk...", mark: "sum" },
    { name: "Data wysyłki" },
    { name: "Data zamówie..." },
    { name: "Kategoria pro..." },
    { name: "Kategoria pro...", mark: "tree" },
    { name: "Klient" },
    { name: "Kod pocztowy", on: true },
    { name: "Koszt dostawy", mark: "sum" },
    { name: "Marża podsta..." },
    { name: "Miasto", on: true },
    { name: "Nazwa produktu" },
    { name: "Nr klienta" },
    { name: "Nr wiersza", mark: "sum" },
    { name: "Nr zamówienia" },
]

function FieldRow({ name, mark, on }: Field) {
    return (
        <li className="mb-0.5 h-5 rounded-sm bg-[#666] shadow-[0_0_0_1px_#383838]">
            <label className="flex h-full items-center text-xs text-white">
                <span className="flex w-[26px] justify-end pr-[5px]">
                    {mark === "tree" && <svg width="5" height="8" viewBox="0 0 5 8"><path d="M0 0V8L5 4Z" fill="#999" /></svg>}
                </span>
                <span className="relative flex h-3 w-3">
                    <input
                        type="checkbox"
                        defaultChecked={on}
                        className="peer h-3 w-3 appearance-none border-2 border-[#c8c8c8] bg-white checked:border-[#f2c811] checked:bg-[#f2c811]"
                    />
                    <svg className="pointer-events-none absolute inset-0 hidden peer-checked:block" width="12" height="12" viewBox="0 0 12 12">
                        <path d="M2.500 6L5 8.500L10 3" stroke="#222" strokeWidth="1.500" fill="none" />
                    </svg>
                </span>
                <span className="flex w-[21px] justify-center">
                    {mark === "sum" && (
                        <svg width="9" height="10" viewBox="0 0 9 10"><path d="M8 2.500V.5H.8L5 5L.8 9.500H8V7.500" stroke="#aaa" fill="none" /></svg>
                    )}
                    {mark === "tree" && (
                        <svg width="12" height="12" viewBox="0 0 12 12">
                            <path d="M2.500 2V10.500H8M2.500 6.500H8" stroke="#222" fill="none" strokeDasharray="2 1" />
                            <path d="M0 0H5V3H0ZM7 4H11V7H7ZM7 9H11V12H7Z" fill="#f2c811" />
                        </svg>
                    )}
                </span>
                <span className="whitespace-nowrap">{name}</span>
            </label>
        </li>
    )
}

function Fields() {
    return (
        <aside className="flex w-[178px] shrink-0 flex-col bg-[#444]">
            <PanelTitle>Pola</PanelTitle>
            <div className="shrink-0 border-b border-black px-2 pt-[7px] pb-2.5 pl-2.5">
                <label className="flex h-[30px] items-center gap-2 border border-black bg-[#212121] pl-[11px]">
                    <svg className="shrink-0" width="16" height="16" viewBox="0 0 16 16" fill="none" stroke="#aaa" strokeWidth="1.200">
                        <circle cx="10" cy="6" r="5" /><path d="M6.500 9.500L.5 15.500" />
                    </svg>
                    <input
                        aria-label="Wyszukaj"
                        placeholder="Wyszukaj"
                        className="w-full min-w-0 bg-transparent text-[13px] text-white placeholder-[#a6a6a6] outline-none"
                    />
                </label>
            </div>
            <div className="relative min-h-0 flex-1 overflow-hidden pr-[5px] pl-[5px]">
                <button className="flex h-[36px] items-center pt-1 pl-1.5 text-xs text-[#f2c811]">
                    <svg width="6" height="6" viewBox="0 0 6 6"><path d="M6 0V6H0Z" fill="#aaa" /></svg>
                    <svg className="mr-2.5 ml-2.5" width="13" height="12" viewBox="0 0 13 12">
                        <path d="M0 0H13V12H0Z" fill="#ccc" />
                        <path d="M1 4H4V6H1ZM5 4H8V6H5ZM9 4H12V6H9ZM1 7H4V9H1ZM5 7H8V9H5ZM9 7H12V9H9ZM1 10H4V11H1ZM5 10H8V11H5ZM9 10H12V11H9Z" fill="#fff" stroke="#777" strokeWidth=".3" />
                    </svg>
                    dane
                </button>
                <ul>
                    {fields.map((f, i) => <FieldRow key={i} {...f} />)}
                    <li className="h-5 rounded-sm bg-[#666]" />
                </ul>
                <span className="absolute top-[7px] right-0 h-[175px] w-1 rounded-sm bg-[#777]" />
            </div>
        </aside>
    )
}

function App() {
    return (
        <div className="flex h-screen w-full flex-col overflow-hidden border-l-2 border-[#1f6da8] font-['Open_Sans','Noto_Sans',sans-serif]">
            <TabBar />
            <Ribbon />
            <div className="flex min-h-0 flex-1">
                <SideRail />
                <Canvas />
                <Visualizations />
                <Fields />
            </div>
            <footer className="flex h-4 shrink-0 items-center bg-[#333] pt-1 pl-[5px] text-[11px] font-medium text-white">STRONA 5 Z 5</footer>
        </div>
    )
}

export default App
